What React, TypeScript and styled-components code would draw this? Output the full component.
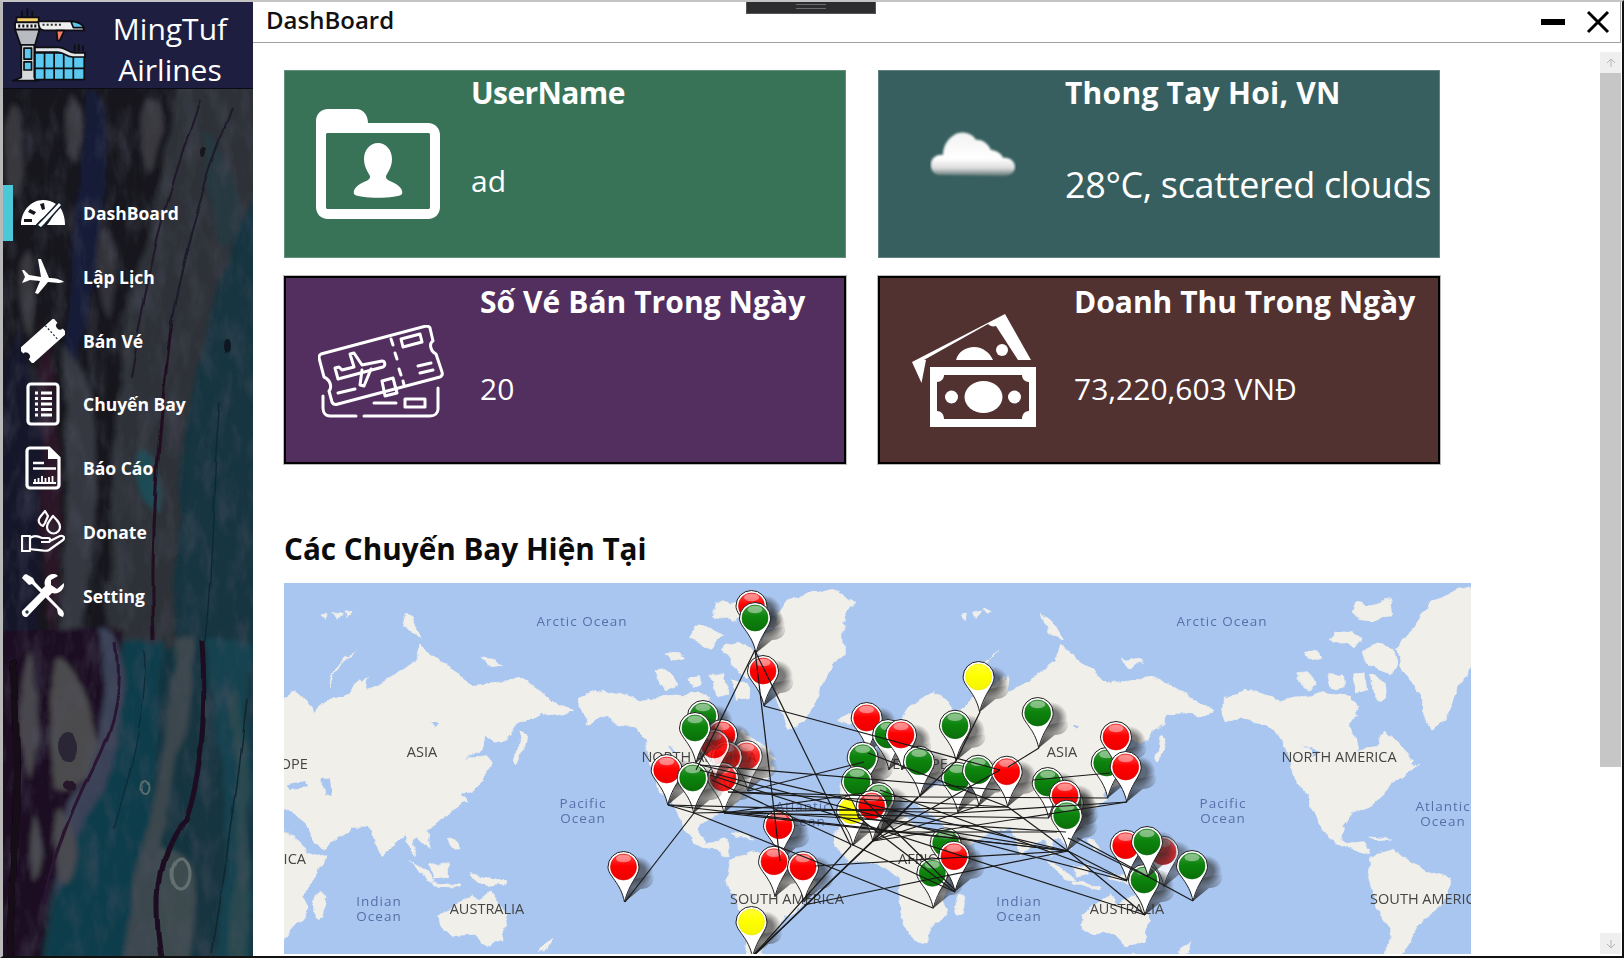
import React from "react";
import styled, { createGlobalStyle } from "styled-components";

const FONT = `"Open Sans", "Noto Sans", "Liberation Sans", sans-serif`;

const Global = createGlobalStyle`
  html, body { margin: 0; padding: 0; background: #fff; overflow: hidden; }
  body { font-family: ${FONT}; }
`;

const Frame = styled.div`
  position: relative;
  width: 1624px;
  height: 958px;
  box-sizing: border-box;
  display: flex;
  background: #fff;
  border-left: 3px solid #b9b9b9;
  border-top: 2px solid #c4c4c4;
  border-right: 2px solid #111;
  border-bottom: 2px solid #111;
  overflow: hidden;
`;

const Grip = styled.div`
  position: absolute;
  left: 743px;
  top: -2px;
  width: 130px;
  height: 14px;
  box-sizing: border-box;
  background: #2d2d30;
  border: 1px solid #555;
  border-top: none;
  display: flex;
  align-items: center;
  justify-content: center;
  &::after {
    content: "";
    width: 30px;
    height: 3px;
    border-top: 1px solid #6a6a6a;
    border-bottom: 1px solid #6a6a6a;
  }
`;

const Sidebar = styled.aside`
  position: relative;
  width: 250px;
  height: 954px;
  flex: none;
  display: flex;
  flex-direction: column;
  background: #12303c;
  overflow: hidden;
`;

const Marble = styled.svg`
  position: absolute;
  left: 0;
  top: 0;
  width: 250px;
  height: 954px;
`;

const Brand = styled.div`
  position: relative;
  height: 87px;
  flex: none;
  display: flex;
  align-items: center;
  padding-left: 8px;
  background: #1e1e40;
  border-bottom: 1px solid #0b0b14;
  box-sizing: border-box;
`;

const BrandName = styled.div`
  flex: 1;
  color: #fff;
  font-size: 30px;
  line-height: 41px;
  text-align: center;
  padding-left: 12px;
  padding-right: 12px;
  padding-top: 7px;
`;

const Nav = styled.nav`
  position: relative;
  display: flex;
  flex-direction: column;
  padding-top: 92px;
`;

const NavRow = styled.div<{ $active?: boolean }>`
  height: 63.85px;
  display: flex;
  align-items: center;
  box-sizing: border-box;
  padding-left: 18px;
  position: relative;
  color: #fff;
  font-size: 17.5px;
  font-weight: 700;
  ${(p) =>
    p.$active &&
    `&::before {
      content: "";
      position: absolute;
      left: 0;
      top: 4px;
      width: 10px;
      height: 56px;
      background: #4bc8d8;
    }`}
`;

const NavIcon = styled.svg`
  width: 44px;
  height: 44px;
  flex: none;
  margin-right: 18px;
`;

const Main = styled.main`
  flex: 1;
  min-width: 0;
  display: flex;
  flex-direction: column;
  padding-right: 1px;
`;

const TitleBar = styled.header`
  height: 41px;
  flex: none;
  display: flex;
  align-items: center;
  box-sizing: border-box;
  padding-left: 13px;
  border-bottom: 1px solid #a0a0a0;
  border-right: 1px solid #a8a8a8;
`;

const WindowTitle = styled.h1`
  flex: 1;
  margin: 0 0 5px;
  font-size: 24px;
  font-weight: 600;
  color: #111;
`;

const WinButton = styled.svg`
  flex: none;
  display: block;
`;

const Body = styled.div`
  flex: 1;
  min-height: 0;
  display: flex;
  overflow: hidden;
`;

const Content = styled.div`
  flex: 1;
  min-width: 0;
  padding: 27px 0 0 31px;
  overflow: hidden;
`;

const CardGrid = styled.div`
  display: grid;
  grid-template-columns: 562px 562px;
  grid-auto-rows: 188px;
  column-gap: 32px;
  row-gap: 18px;
`;

const Card = styled.section<{ $bg: string; $framed?: boolean; $textLeft: number }>`
  background: ${(p) => p.$bg};
  box-sizing: border-box;
  display: grid;
  grid-template-columns: ${(p) => p.$textLeft}px 1fr;
  color: #fff;
  ${(p) =>
    p.$framed
      ? `border: 2px solid #000; outline: 1px solid #bbb; outline-offset: 0;`
      : `box-shadow: inset 0 0 0 1px rgba(255,255,255,.22);`}
`;

const CardIcon = styled.div<{ $left: number; $top: number }>`
  padding-left: ${(p) => p.$left}px;
  padding-top: ${(p) => p.$top}px;
`;

const CardText = styled.div<{ $top: number; $gap: number }>`
  display: flex;
  flex-direction: column;
  padding-top: ${(p) => p.$top}px;
  gap: ${(p) => p.$gap}px;
`;

const CardTitle = styled.div<{ $track?: number }>`
  font-size: 30px;
  line-height: 40px;
  font-weight: 700;
  white-space: nowrap;
  letter-spacing: ${(p) => p.$track ?? 0}px;
`;

const CardValue = styled.div<{ $size: number }>`
  font-size: ${(p) => p.$size}px;
  line-height: 48px;
  white-space: nowrap;
  letter-spacing: ${(p) => (p.$size > 32 ? "-0.35px" : "0")};
`;

const SectionTitle = styled.h2`
  margin: 65px 0 14px;
  font-size: 29.7px;
  line-height: 40px;
  font-weight: 700;
  color: #0b0b0b;
`;

const MapBox = styled.div`
  width: 1187px;
  height: 371px;
  background: #a9c6f0;
  overflow: hidden;
`;

const MapSvg = styled.svg`
  display: block;
  width: 1187px;
  height: 371px;
`;

const Scrollbar = styled.div`
  width: 21px;
  flex: none;
  margin-top: 9px;
  display: flex;
  flex-direction: column;
`;

const ScrollArrow = styled.div`
  height: 21px;
  flex: none;
  background: #efefef;
  display: flex;
  align-items: center;
  justify-content: center;
`;

const ScrollThumb = styled.div`
  height: 694px;
  flex: none;
  background: #c6c6c6;
`;

const ScrollTrack = styled.div`
  height: 166px;
  flex: none;
  background: #fff;
`;

/* ---------- icons ---------- */

const Logo = () => (
  <svg width="76" height="76" viewBox="30 26 222 222" style={{ flex: "none" }}>
    <g stroke="#0d0d12" strokeWidth="5" strokeLinejoin="round">
      <path d="M62 55V36M78 55V30M92 55V38" fill="none" />
      <rect x="46" y="56" width="65" height="15" fill="#f3cf68" />
      <rect x="42" y="71" width="71" height="21" fill="#f0f0f0" />
      <path d="M54 77v9M66 77v9M78 77v9M90 77v9M101 77v9" strokeWidth="6" />
      <path d="M42 92H113L100 137H58Z" fill="#b8bcc2" />
      <path d="M60 137H98V232L110 241H36L60 232Z" fill="#d7dadd" />
      <rect x="68" y="146" width="22" height="32" fill="#5ac8ef" />
      <rect x="68" y="186" width="22" height="24" fill="#5ac8ef" />
      <path d="M110 68H206C226 68 242 80 244 94H128C116 94 110 86 110 68Z" fill="#eceef0" />
      <path d="M205 68C226 68 240 78 243 86H212Z" fill="#5ac8ef" />
      <path d="M163 95H186L172 124H166Z" fill="#f07f6a" />
      <path d="M122 78h60" stroke="#333" strokeWidth="6" strokeDasharray="6 6" fill="none" />
      <path d="M100 160H244V238H100Z" fill="#5ac8ef" />
      <path d="M128 160V238M156 160V238M184 160V238M212 160V238M100 205H244" fill="none" />
      <path d="M100 144H170C190 144 196 160 216 160H246V172H210C190 172 186 158 166 158H100Z" fill="#e4e6e8" />
      <path d="M216 155V136M228 155V134M240 155V138" fill="none" />
    </g>
  </svg>
);

const GaugeIcon = () => (
  <NavIcon viewBox="0 0 44 44">
    <path
      fillRule="evenodd"
      fill="#fff"
      d="M0 34C0 20 10 9 22 9C27 9 31 10.500 35 13L24 26C21 27 17 31 15 34ZM19 13L21 19L24 18L23 12ZM9 18L7 21L13 24L15 21ZM3 28L3 31L11 31L11 28ZM38 15C42 20 44 27 44 34H26C27 33 28 31 29 30Z"
    />
    <path d="M38 11L20 30L16 34L20 37L24 33L41 14Z" fill="#fff" stroke="#12222e" strokeWidth="1.500" />
  </NavIcon>
);

const PlaneIcon = () => (
  <NavIcon viewBox="0 0 44 44">
    <path
      fill="#fff"
      d="M43 27C40 24.500 34 23 28 23L20 4L17 4L20 22L8 20L3 15L1 15L4 22L1 28L4 27L9 25L19 26L14 38L17 39L27 27L38 28Z"
    />
  </NavIcon>
);

const TicketIcon = () => (
  <NavIcon viewBox="0 0 44 44">
    <g transform="rotate(-42 22 22)">
      <path fill="#fff" d="M-1 12H45V18A4 4 0 0 0 45 26V32H-1V26A4 4 0 0 0 -1 18Z" />
      <path d="M34 12V32" stroke="#1c2a36" strokeWidth="1.200" strokeDasharray="2 2" />
    </g>
  </NavIcon>
);

const ListIcon = () => (
  <NavIcon viewBox="0 0 44 44">
    <rect x="7" y="2" width="30" height="40" rx="3" fill="none" stroke="#fff" strokeWidth="3.200" />
    <path
      d="M14 11h3M20 11h11M14 16.500h3M20 16.500h11M14 22h3M20 22h11M14 27.500h3M20 27.500h11M14 33h3M20 33h11"
      stroke="#fff"
      strokeWidth="3"
      fill="none"
    />
  </NavIcon>
);

const ReportIcon = () => (
  <NavIcon viewBox="0 0 44 44">
    <path
      d="M9 2H28L38 12V39A3 3 0 0 1 35 42H9A3 3 0 0 1 6 39V5A3 3 0 0 1 9 2Z"
      fill="none"
      stroke="#fff"
      strokeWidth="3.200"
    />
    <path d="M27 2V13H38Z" fill="#fff" />
    <path d="M12 17h11M12 22.500h23" stroke="#fff" strokeWidth="2.400" />
    <path
      d="M12 37H35M14 37v-4M17.500 37v-5M21 37v-7M24.500 37v-5M28 37v-6M31.500 37v-7"
      stroke="#fff"
      strokeWidth="1.800"
      fill="none"
    />
  </NavIcon>
);

const DonateIcon = () => (
  <NavIcon viewBox="0 0 44 44">
    <g fill="none" stroke="#fff" strokeWidth="2.200" strokeLinejoin="round">
      <path d="M1 26H9V41H1Z" />
      <path d="M9 28C13 25 17 26 21 28H27C30 28 30 32 27 32H20M29 31L39 26C43 25 44 28 42 30L28 40C25 42 18 40 9 39" />
      <path d="M32 6C36 10 39 13 39 17A6.500 6.500 0 0 1 26 17C26 13 29 10 32 6Z" />
      <path d="M24 1L27 6L24 13L22 16C19 15 17 12 18 9C19 6 22 4 24 1Z" />
    </g>
  </NavIcon>
);

const SettingIcon = () => (
  <NavIcon viewBox="0 0 44 44">
    <g fill="#fff">
      <path d="M3 1L1 4L8 11L11 10L36 35L37 40L39 42L42 43L43 40L42 37L38 33L14 8L12 4L5 0Z" />
      <path d="M6 43A4.500 4.500 0 0 1 1 37L20 18L25 23Z" />
      <path d="M32 0C27 0 22 6 24 12L20 16L27 23L31 19C38 21 44 15 43 9L36 15L30 11L30 6L37 2C35 0 34 0 32 0Z" />
    </g>
    <circle cx="6" cy="38" r="1.700" fill="#1b3a46" />
  </NavIcon>
);

const FolderIcon = () => (
  <svg width="124" height="110" viewBox="0 0 124 110" style={{ display: "block" }}>
    <path
      fillRule="evenodd"
      fill="#fff"
      d="M12 0H40C47 0 52 6 52 14H112C119 14 124 19 124 26V98C124 105 119 110 112 110H12C5 110 0 105 0 98V12C0 5 5 0 12 0ZM12 24C10.500 24 10 24.500 10 26V98C10 99.500 10.500 100 12 100H112C113.500 100 114 99.500 114 98V26C114 24.500 113.500 24 112 24Z"
    />
    <path
      fill="#fff"
      d="M62 34C70 34 76 41 76 50C76 58 72 63 70 67C69 71 75 72 80 75C85 78 87 82 86 85C82 90 42 90 38 85C37 82 39 78 44 75C49 72 55 71 54 67C52 63 48 58 48 50C48 41 54 34 62 34Z"
    />
  </svg>
);

const TicketCardIcon = () => (
  <svg width="126" height="94" viewBox="0 0 126 94" style={{ display: "block" }}>
    <g fill="none" stroke="#fff" strokeWidth="3" strokeLinejoin="round" strokeLinecap="round">
      <path d="M3 29L108 1C110 1 112 2 112 3L115 16C111 18 112 26 118 29L124 47C125 50 124 51 122 52L20 79C17 80 15 79 14 77L11 66C14 63 13 55 6 52L1 33C1 31 1 30 3 29Z" />
      <path d="M5 71V83C5 88 8 91 12 91H38M46 91H112C117 91 120 88 120 84V63" />
      <path d="M56 78H78M87 74H107V82H87Z" />
      <path d="M83 14L102 9L104 17L85 22Z" />
      <path d="M73 14L75 20M77 28L79 34M81 44L83 50M85 56L86 60" />
      <path d="M100 41L113 38M102 48L115 45" />
      <path d="M64 56L75 53L79 68L67 71Z" />
      <path d="M20 68L37 64" />
      <path d="M20 54L65 42C68 40 67 36 64 36L44 40L36 28L32 29L36 42L24 45L21 42L17 43Z" />
      <path d="M44 45L42 60L46 61L53 44" />
    </g>
  </svg>
);

const CloudIcon = () => (
  <svg width="86" height="48" viewBox="0 0 86 48" style={{ display: "block" }}>
    <defs>
      <linearGradient id="cloudFill" x1="0" y1="0" x2="0" y2="1">
        <stop offset="0" stopColor="#f2f2f2" />
        <stop offset="0.6" stopColor="#ffffff" />
        <stop offset="0.82" stopColor="#dcdcdc" />
        <stop offset="1" stopColor="#5d7373" />
      </linearGradient>
      <filter id="cloudBlur">
        <feGaussianBlur stdDeviation="0.800" />
      </filter>
    </defs>
    <path
      filter="url(#cloudBlur)"
      fill="url(#cloudFill)"
      d="M10 45C3 45 0 38 1 33C2 27 8 24 13 25C13 18 16 10 24 5C32 0 42 3 46 10C51 9 58 13 61 20C66 20 72 24 73 28C79 27 85 31 85 37C85 42 80 46 74 46Z"
    />
  </svg>
);

const MoneyIcon = () => (
  <svg width="126" height="114" viewBox="0 0 126 114" style={{ display: "block" }}>
    <path
      fillRule="evenodd"
      fill="#fff"
      d="M0 48L93 0L119 46L14 46L9.500 69ZM12 46H44C46 38 54 33 62 33C71 33 78 39 81 46H106L84 12C81 13 78 12 76 10Z"
    />
    <circle cx="90" cy="36" r="6" fill="#fff" />
    <path
      fillRule="evenodd"
      fill="#fff"
      d="M18 53H124V113H18ZM32 61C32 65 29 68 25 68V97C29 97 32 100 32 105H110C110 100 113 97 117 97V68C113 68 110 65 110 61Z"
    />
    <ellipse cx="71.500" cy="83" rx="19" ry="16" fill="#fff" />
    <circle cx="39.500" cy="83" r="6.500" fill="#fff" />
    <circle cx="102.500" cy="83" r="6.500" fill="#fff" />
  </svg>
);

/* ---------- sidebar marble (a drawn picture) ---------- */

const MarbleArt = () => (
  <Marble viewBox="3 2 250 954">
    <defs>
      <filter id="mb" x="-5%" y="-5%" width="110%" height="110%">
        <feTurbulence type="fractalNoise" baseFrequency="0.025 0.012" numOctaves="3" seed="7" result="n" />
        <feDisplacementMap in="SourceGraphic" in2="n" scale="18" xChannelSelector="R" yChannelSelector="G" />
        <feGaussianBlur stdDeviation="2.600" />
      </filter>
      <filter id="mb2" x="-5%" y="-5%" width="110%" height="110%">
        <feTurbulence type="fractalNoise" baseFrequency="0.03 0.015" numOctaves="2" seed="3" result="n" />
        <feDisplacementMap in="SourceGraphic" in2="n" scale="8" xChannelSelector="R" yChannelSelector="G" />
        <feGaussianBlur stdDeviation="0.500" />
      </filter>
      <filter id="grain">
        <feTurbulence type="fractalNoise" baseFrequency="0.06 0.025" numOctaves="4" seed="5" />
        <feColorMatrix values="0 0 0 0 0.08  0 0 0 0 0.08  0 0 0 0 0.12  0 0 0 2.2 -0.95" />
      </filter>
    </defs>
    <rect x="3" y="2" width="250" height="954" fill="#13343f" />
    <g filter="url(#mb)">
      {/* upper-left dark */}
      <path d="M-10 80H180C170 150 150 240 125 320C115 420 120 520 115 640H-10Z" fill="#15151e" />
      {/* wide grey diagonal band */}
      <path d="M176 80H262V170C230 240 210 320 190 400C180 470 175 560 172 650H110C108 540 112 420 125 320C148 240 168 160 176 80Z" fill="#2f3237" />
      {/* teal right */}
      <path d="M262 210V970H195C200 860 172 780 176 650C178 540 188 420 212 320C225 280 240 240 262 210Z" fill="#12343f" />
      {/* navy streak */}
      <path d="M88 90C108 90 114 130 104 200C94 280 78 340 70 420C62 360 66 280 78 200C84 150 80 120 88 90Z" fill="#191d38" />
      <path d="M20 330C40 360 46 470 36 640H-10V400Z" fill="#17182c" />
      {/* grey patches */}
      <path d="M12 105C28 120 30 165 20 195C8 190 4 150 6 125ZM68 95C84 105 82 140 76 165C66 155 60 120 68 95ZM150 100C170 100 166 150 146 178C134 160 138 122 150 100ZM28 250C40 270 40 310 32 340C20 320 18 280 28 250Z" fill="#39383c" />
      <path d="M100 230C118 220 122 290 110 320C96 300 92 260 100 230Z" fill="#303137" />
      {/* maroon streak */}
      <path d="M42 320C64 380 62 520 50 650C40 560 36 420 42 320Z" fill="#2a1426" />
      {/* mid grey left-centre */}
      <path d="M62 340C88 360 104 420 96 520C92 580 88 620 78 650H56C64 560 70 440 62 340Z" fill="#36383f" />
      {/* teal patches within grey */}
      <path d="M140 450C158 450 166 480 160 510C146 520 132 490 140 450Z" fill="#1c4b55" />
      <path d="M200 130C225 140 240 190 240 230L222 250C214 210 206 170 200 130Z" fill="#283840" />
      {/* bottom left maroon mass */}
      <path d="M-10 630H122C122 690 118 740 86 790C60 840 48 900 40 970H-10Z" fill="#1f0f22" />
      {/* blue grey edge */}
      <path d="M100 630C122 630 130 680 120 730C112 780 72 840 55 900C50 860 64 810 82 780C100 730 108 690 100 630Z" fill="#3a4258" />
      {/* bottom teal */}
      <path d="M122 640H160C165 720 152 790 140 860C134 900 132 940 130 970H44C52 890 72 840 96 800C118 760 130 700 122 640Z" fill="#0e3e4b" />
      {/* grey band bottom */}
      <path d="M172 640H192C190 720 176 770 166 820C158 870 160 920 162 970H124C130 900 142 840 156 780C168 730 172 690 172 640Z" fill="#3a474d" />
      {/* grey oval area */}
      <path d="M160 845C188 845 200 880 194 920L186 970H158C154 920 152 880 160 845Z" fill="#3e4c50" />
      {/* far right */}
      <path d="M206 640H250V970H216C226 880 232 780 206 640Z" fill="#12434f" />
      <path d="M232 700C240 760 236 860 226 970H244C252 860 248 760 240 690Z" fill="#2b4a50" />
      {/* blobs lower left */}
      <path d="M30 650C42 680 42 750 30 782C18 750 18 690 30 650Z" fill="#48464e" />
      <path d="M58 660C78 670 92 710 94 745C88 780 70 796 54 790C46 750 50 700 58 660Z" fill="#4b4b4e" />
      <path d="M34 815C44 830 42 870 30 884C24 870 26 840 34 815ZM62 808C76 820 76 870 62 888C50 880 48 840 62 808Z" fill="#484a50" />
    </g>
    <rect x="3" y="2" width="250" height="954" filter="url(#grain)" opacity="0.45" />
    <g filter="url(#mb2)" fill="none">
      <path d="M202 640C206 700 204 770 186 820C174 830 160 860 158 900C158 925 160 945 162 955" stroke="#1c0d20" strokeWidth="5" />
      <path d="M116 640C122 680 118 720 92 770C72 810 56 850 44 905" stroke="#2a1530" strokeWidth="3" />
      <path d="M12 660C20 740 16 850 10 955" stroke="#120818" strokeWidth="7" />
      <path d="M246 700C236 790 224 880 212 955" stroke="#0d2732" strokeWidth="1.500" />
      <path d="M172 320C158 430 150 540 154 640" stroke="#200e24" strokeWidth="3" />
      <path d="M220 400C212 480 214 560 205 640" stroke="#0c2832" strokeWidth="1.300" />
      <path d="M200 100C165 200 145 280 130 380" stroke="#20182a" strokeWidth="2" />
      <path d="M232 110C200 190 180 270 170 330" stroke="#1c1a2a" strokeWidth="2" />
      <path d="M145 650C150 700 135 760 115 830" stroke="#0c2a36" strokeWidth="1.200" />
      <ellipse cx="180" cy="873" rx="9" ry="15" stroke="#64706f" strokeWidth="3" />
      <ellipse cx="145" cy="787" rx="3.500" ry="7" stroke="#5a6b6c" strokeWidth="2" />
      <ellipse cx="68" cy="747" rx="10" ry="15" fill="#2a2735" />
      <ellipse cx="70" cy="786" rx="7" ry="5" fill="#26142a" />
      <ellipse cx="204" cy="153" rx="3" ry="5" fill="#14141c" />
      <ellipse cx="228" cy="345" rx="3" ry="7" fill="#101820" />
    </g>
  </Marble>
);

/* ---------- map (a drawn picture) ---------- */

const LAND = "#f1efea";

const WorldA = () => (
  <g fill={LAND} stroke={LAND} strokeWidth="2" strokeLinejoin="round">
    {/* Eurasia */}
    <path d="M-50 420L-20 370L40 335L75 370L90 395L135 350L165 345L215 295L225 335L290 290L355 250L365 195L415 240L500 310L560 305L630 300L700 345L765 395L735 412L690 395L650 410L625 432L590 480L560 480L530 470L525 510L480 535L540 530L555 562L540 590L510 612L480 640L490 665L445 690L420 722L395 745L388 800L360 775L345 785L355 830L335 800L320 770L265 830L232 745L190 745L160 770L125 795L95 790L60 725L40 700L10 680L-30 670L-60 655L-90 690L-120 660L-205 665L-200 605L-150 590L-125 555L-90 490Z" />
    {/* Africa */}
    <path d="M-220 770L-190 720L-110 700L-50 712L0 735L38 765L70 825L125 815L90 880L60 950L72 985L30 1050L5 1082L-25 1075L-50 985L-60 890L-110 850L-190 850L-220 810Z" />
    <path d="M105 940L120 945L110 1005L92 1010L90 975Z" />
    {/* Australia */}
    <path d="M420 1005L460 975L498 942L520 965L552 938L600 1020L582 1080L540 1097L510 1060L450 1065L425 1042Z" />
    <path d="M555 1122L570 1120L565 1135Z" />
    {/* Indonesia, Japan, etc */}
    <path d="M338 845L380 870L412 905L395 905L355 875Z" />
    <path d="M395 860L440 850L440 885L410 895Z" />
    <path d="M500 875L545 885L585 915L550 915L510 895Z" />
    <path d="M400 908L470 915L470 922L405 918Z" />
    <path d="M440 775L460 780L470 810L450 810Z" />
    <path d="M625 462L640 470L632 510L618 548L612 540L620 500Z" />
    <path d="M695 1100L715 1085L705 1115L680 1122Z" />
    {/* north islands */}
    <path d="M320 100L345 125L370 175L345 165L325 130Z" />
    <path d="M525 235L560 245L585 255L550 260Z" />
    <path d="M105 100L125 95L118 115ZM140 95L165 100L150 118ZM170 92L190 98L175 108Z" />
    <path d="M135 305L150 265L205 212L170 240L150 275L130 325Z" />
    <path d="M205 320L230 290L225 350L205 345Z" />
    {/* Greenland */}
    <path d="M1245 205L1275 165L1330 60L1440 20L1505 75L1470 130L1472 220L1420 300L1372 420L1332 452L1292 312L1255 262Z" />
    {/* Canadian archipelago */}
    <path d="M1140 65L1175 75L1230 60L1235 100L1180 125L1130 105Z" />
    <path d="M1090 150L1125 150L1160 170L1130 205L1100 195L1075 180Z" />
    <path d="M1000 215L1040 208L1055 232L1020 240Z" />
    <path d="M1155 215L1195 185L1235 210L1245 260L1222 285L1180 255Z" />
    <path d="M985 275L1010 272L1045 318L1012 330L990 310Z" />
    <path d="M1068 285L1096 285L1100 320L1078 330Z" />
    <path d="M1128 285L1165 275L1170 335L1142 345Z" />
    <path d="M1185 295L1218 305L1222 355L1192 362Z" />
    <path d="M1460 420L1500 395L1520 410L1490 430Z" />
    <path d="M1225 470L1255 500L1290 540L1255 560L1225 520Z" />
  </g>
);

const WorldB = () => (
  <g fill={LAND} stroke={LAND} strokeWidth="2" strokeLinejoin="round" transform="translate(-157 0)">
    {/* North America */}
    <path d="M947 355L1000 330L1040 340L1100 365L1150 350L1200 345L1280 355L1300 400L1285 440L1300 512L1352 500L1362 452L1402 502L1452 562L1420 592L1375 618L1345 675L1290 700L1262 745L1252 765L1268 790L1320 785L1340 820L1318 825L1270 800L1220 770L1190 680L1140 615L1130 565L1110 480L1060 430L1000 412L960 432L945 390Z" />
    <path d="M1330 765L1375 770L1390 780L1345 775Z" />
    {/* South America */}
    <path d="M1340 832L1400 808L1470 870L1552 910L1522 982L1472 1012L1442 1072L1405 1135L1375 1130L1385 1040L1345 970L1330 900Z" />
  </g>
);

const Lakes = () => (
  <g fill="#a9c6f0">
    <path d="M10 610L60 600L65 625L20 630Z" />
    <path d="M110 590L130 590L135 645L115 640Z" />
    <path d="M395 430L412 428L410 442Z" />
    <path d="M1010 505L1040 515L1025 525Z" />
  </g>
);

const OceanLabel = styled.text`
  font-family: ${FONT};
  font-size: 13.5px;
  letter-spacing: 1px;
  fill: #5670a8;
  text-anchor: middle;
`;

const LandLabel = styled.text`
  font-family: ${FONT};
  font-size: 14.5px;
  fill: #444;
  text-anchor: middle;
`;

const OCEAN_LABELS: [string, number, number][] = [
  ["Arctic Ocean", 582, 626],
  ["Pacific", 583, 808],
  ["Ocean", 583, 823],
  ["Indian", 379, 906],
  ["Ocean", 379, 921],
  ["Atlantic", 803, 811],
  ["Ocean", 803, 826],
];
const LAND_LABELS: [string, number, number][] = [
  ["ASIA", 422, 757],
  ["EUROPE", 280, 769],
  ["AFRICA", 282, 864],
  ["AUSTRALIA", 487, 914],
  ["NORTH AMERICA", 699, 762],
  ["SOUTH AMERICA", 787, 904],
];

type PinColor = "r" | "g" | "y";
type Pin = [PinColor, number, number, number?];

const PINS: Pin[] = [
  ["r", 751.5, 606],
  ["g", 755, 618],
  ["r", 763, 671],
  ["r", 623.5, 867],
  ["g", 703, 716],
  ["r", 722, 735],
  ["r", 746.7, 756, 0.85],
  ["r", 726.7, 757, 0.9],
  ["r", 723, 778, 0.9],
  ["r", 714, 745, 0.85],
  ["g", 695, 728],
  ["r", 666.7, 770],
  ["g", 692.7, 778],
  ["r", 779, 825.7],
  ["r", 774, 861.7],
  ["r", 803, 867],
  ["y", 751.5, 922],
  ["y", 852, 810.7],
  ["r", 866.7, 718],
  ["g", 888, 735],
  ["r", 901, 735],
  ["g", 862.7, 757.7],
  ["g", 857, 781.7],
  ["g", 879, 798],
  ["r", 871.7, 806],
  ["g", 919, 761.7],
  ["y", 978.6, 677],
  ["g", 955, 725.7],
  ["g", 1037.7, 713],
  ["g", 957, 777.7],
  ["g", 978, 770.7],
  ["r", 1006.7, 771.7],
  ["g", 1106.7, 763],
  ["r", 1116, 737],
  ["r", 1125.7, 767],
  ["g", 1047.7, 783],
  ["g", 1068, 803],
  ["r", 1065, 795.7],
  ["g", 1066.7, 815.7],
  ["g", 945.7, 843.3],
  ["g", 932.3, 873.3],
  ["r", 954, 856.7],
  ["r", 1125.7, 845.7],
  ["r", 1163, 851.7, 0.8],
  ["g", 1144, 880],
  ["g", 1147, 842],
  ["g", 1192, 866],
];

const LINES: number[][] = [
  [625, 902, 694, 813],
  [755, 650, 780, 861],
  [755, 650, 696, 770],
  [756, 653, 851, 846],
  [764, 706, 1000, 770],
  [668, 805, 1068, 851],
  [668, 805, 958, 813],
  [668, 805, 694, 813],
  [694, 813, 933, 908],
  [694, 813, 1008, 807],
  [724, 813, 1049, 818],
  [724, 813, 1068, 851],
  [724, 813, 864, 793],
  [700, 765, 1000, 790],
  [700, 765, 1068, 851],
  [700, 770, 1127, 881],
  [710, 775, 1145, 915],
  [712, 780, 955, 892],
  [728, 792, 918, 797],
  [728, 792, 1008, 807],
  [748, 791, 864, 762],
  [750, 812, 1066, 832],
  [752, 957, 851, 846],
  [752, 957, 873, 841],
  [752, 957, 918, 797],
  [804, 905, 1068, 851],
  [815, 866, 1068, 851],
  [873, 841, 1000, 770],
  [873, 841, 956, 761],
  [873, 841, 1127, 802],
  [873, 841, 979, 806],
  [956, 761, 980, 712],
  [1039, 748, 1008, 767],
  [1033, 780, 1110, 773],
  [1008, 807, 1068, 851],
  [958, 813, 1127, 802],
  [920, 797, 1108, 798],
  [1068, 851, 1145, 915],
  [1068, 851, 1127, 881],
  [1077, 838, 1193, 901],
  [1068, 838, 1148, 877],
  [858, 817, 955, 892],
  [864, 800, 955, 890],
  [880, 790, 1127, 880],
  [868, 753, 1008, 807],
  [860, 832, 1057, 832],
  [858, 817, 1068, 851],
];

const PinMark = ({ color, x, y, opacity }: { color: PinColor; x: number; y: number; opacity?: number }) => (
  <g transform={`translate(${x} ${y})`} opacity={opacity ?? 1}>
    <path d="M1 35L10 12L30 8C32 18 24 22 17 22Z" fill="url(#pinShade)" />
    <ellipse cx="13" cy="5" rx="17" ry="16" fill="url(#pinBlob)" />
    <path
      d="M-15.500 0A15.500 15.500 0 1 1 15.500 0C15.500 9 6 15 1 35C-3 15 -15.500 9 -15.500 0Z"
      fill="#fff"
      stroke="#1e1e1e"
      strokeWidth="1"
    />
    <circle r="13" fill={`url(#pin-${color})`} stroke={color === "y" ? "#e8e800" : color === "r" ? "#d80000" : "#066806"} strokeWidth="0.6" />
    {color !== "y" && <ellipse cy="-8.500" rx="7.500" ry="3.800" fill="#fff" opacity="0.42" />}
  </g>
);

const PinGrad = ({ id, top, mid, bottom }: { id: string; top: string; mid: string; bottom: string }) => (
  <linearGradient id={id} x1="0" y1="0" x2="0" y2="1">
    <stop offset="0" stopColor={top} />
    <stop offset="0.45" stopColor={mid} />
    <stop offset="1" stopColor={bottom} />
  </linearGradient>
);

const WorldMap = () => (
  <MapSvg viewBox="284 583 1187 371">
    <defs>
      <PinGrad id="pin-r" top="#ff5050" mid="#ff0000" bottom="#ee0000" />
      <PinGrad id="pin-g" top="#3f9a3f" mid="#0c850c" bottom="#0b6f0b" />
      <PinGrad id="pin-y" top="#ffff33" mid="#ffff00" bottom="#f4f400" />
      <radialGradient id="pinBlob" cx="0.5" cy="0.5" r="0.5">
        <stop offset="0.5" stopColor="#2a2a2a" stopOpacity="0.6" />
        <stop offset="1" stopColor="#2a2a2a" stopOpacity="0" />
      </radialGradient>
      <linearGradient id="pinShade" x1="0" y1="1" x2="1" y2="0">
        <stop offset="0" stopColor="#222" stopOpacity="0.9" />
        <stop offset="1" stopColor="#333" stopOpacity="0.05" />
      </linearGradient>
      <filter id="mapSoft" x="-5%" y="-5%" width="110%" height="110%">
        <feTurbulence type="fractalNoise" baseFrequency="0.045" numOctaves="4" seed="11" result="n" />
        <feDisplacementMap in="SourceGraphic" in2="n" scale="13" xChannelSelector="R" yChannelSelector="G" />
        <feGaussianBlur stdDeviation="0.600" />
      </filter>
      <filter id="labelSoft"><feGaussianBlur stdDeviation="0.250" /></filter>
    </defs>
    <rect x="284" y="583" width="1187" height="371" fill="#a9c6f0" />
    <g filter="url(#mapSoft)">
      {[280, 920].map((tx) => (
        <g key={tx} transform={`translate(${tx} 580) scale(0.3827 0.3333)`}>
          <WorldA />
          <WorldB />
          <Lakes />
        </g>
      ))}
    </g>
    <g filter="url(#labelSoft)">
      {[0, 640].map((dx) => (
        <g key={dx}>
          {OCEAN_LABELS.map(([t, x, y]) => (
            <OceanLabel key={t + x + y} x={x + dx} y={y}>{t}</OceanLabel>
          ))}
          {LAND_LABELS.map(([t, x, y]) => (
            <LandLabel key={t} x={x + dx} y={y}>{t}</LandLabel>
          ))}
        </g>
      ))}
    </g>
    {PINS.map(([c, x, y, o], i) => (
      <PinMark key={i} color={c} x={x} y={y} opacity={o} />
    ))}
    <g stroke="#1a1a1a" strokeWidth="1.200">
      {LINES.map((l, i) => (
        <line key={i} x1={l[0]} y1={l[1]} x2={l[2]} y2={l[3]} />
      ))}
    </g>
  </MapSvg>
);

/* ---------- page ---------- */

const NAV = [
  { label: "DashBoard", Icon: GaugeIcon, active: true },
  { label: "Lập Lịch", Icon: PlaneIcon },
  { label: "Bán Vé", Icon: TicketIcon },
  { label: "Chuyến Bay", Icon: ListIcon },
  { label: "Báo Cáo", Icon: ReportIcon },
  { label: "Donate", Icon: DonateIcon },
  { label: "Setting", Icon: SettingIcon },
];

export default function App() {
  return (
    <>
      <Global />
      <Frame>
        <Sidebar>
          <MarbleArt />
          <Brand>
            <Logo />
            <BrandName>
              MingTuf
              <br />
              Airlines
            </BrandName>
          </Brand>
          <Nav>
            {NAV.map(({ label, Icon, active }) => (
              <NavRow key={label} $active={active}>
                <Icon />
                {label}
              </NavRow>
            ))}
          </Nav>
        </Sidebar>
        <Main>
          <TitleBar>
            <WindowTitle>DashBoard</WindowTitle>
            <WinButton width="24" height="6" style={{ marginRight: 21 }}>
              <rect width="24" height="6" fill="#000" />
            </WinButton>
            <WinButton width="24" height="24" style={{ marginRight: 10 }}>
              <path d="M2 2L22 22M22 2L2 22" stroke="#000" strokeWidth="3" />
            </WinButton>
          </TitleBar>
          <Body>
            <Content>
              <CardGrid>
                <Card $bg="#397357" $textLeft={187}>
                  <CardIcon $left={32} $top={39}>
                    <FolderIcon />
                  </CardIcon>
                  <CardText $top={3} $gap={44}>
                    <CardTitle $track={-0.6}>UserName</CardTitle>
                    <CardValue $size={30}>ad</CardValue>
                  </CardText>
                </Card>
                <Card $bg="#375f5f" $textLeft={187}>
                  <CardIcon $left={52} $top={60}>
                    <CloudIcon />
                  </CardIcon>
                  <CardText $top={3} $gap={48}>
                    <CardTitle $track={0.25}>Thong Tay Hoi, VN</CardTitle>
                    <CardValue $size={36}>28°C, scattered clouds</CardValue>
                  </CardText>
                </Card>
                <Card $bg="#522f5f" $framed $textLeft={194}>
                  <CardIcon $left={32} $top={47}>
                    <TicketCardIcon />
                  </CardIcon>
                  <CardText $top={4} $gap={43}>
                    <CardTitle $track={0.05}>Số Vé Bán Trong Ngày</CardTitle>
                    <CardValue $size={30}>20</CardValue>
                  </CardText>
                </Card>
                <Card $bg="#523131" $framed $textLeft={194}>
                  <CardIcon $left={32} $top={36}>
                    <MoneyIcon />
                  </CardIcon>
                  <CardText $top={4} $gap={43}>
                    <CardTitle>Doanh Thu Trong Ngày</CardTitle>
                    <CardValue $size={30}>73,220,603 VNĐ</CardValue>
                  </CardText>
                </Card>
              </CardGrid>
              <SectionTitle>Các Chuyến Bay Hiện Tại</SectionTitle>
              <MapBox>
                <WorldMap />
              </MapBox>
            </Content>
            <Scrollbar>
              <ScrollArrow>
                <svg width="10" height="10" viewBox="0 0 10 10">
                  <path d="M5 9V1M1 5L5 1L9 5" fill="none" stroke="#b5b5b5" strokeWidth="1" />
                </svg>
              </ScrollArrow>
              <ScrollThumb />
              <ScrollTrack />
              <ScrollArrow>
                <svg width="10" height="10" viewBox="0 0 10 10">
                  <path d="M5 1V9M1 5L5 9L9 5" fill="none" stroke="#b5b5b5" strokeWidth="1" />
                </svg>
              </ScrollArrow>
            </Scrollbar>
          </Body>
        </Main>
        <Grip />
      </Frame>
    </>
  );
}
